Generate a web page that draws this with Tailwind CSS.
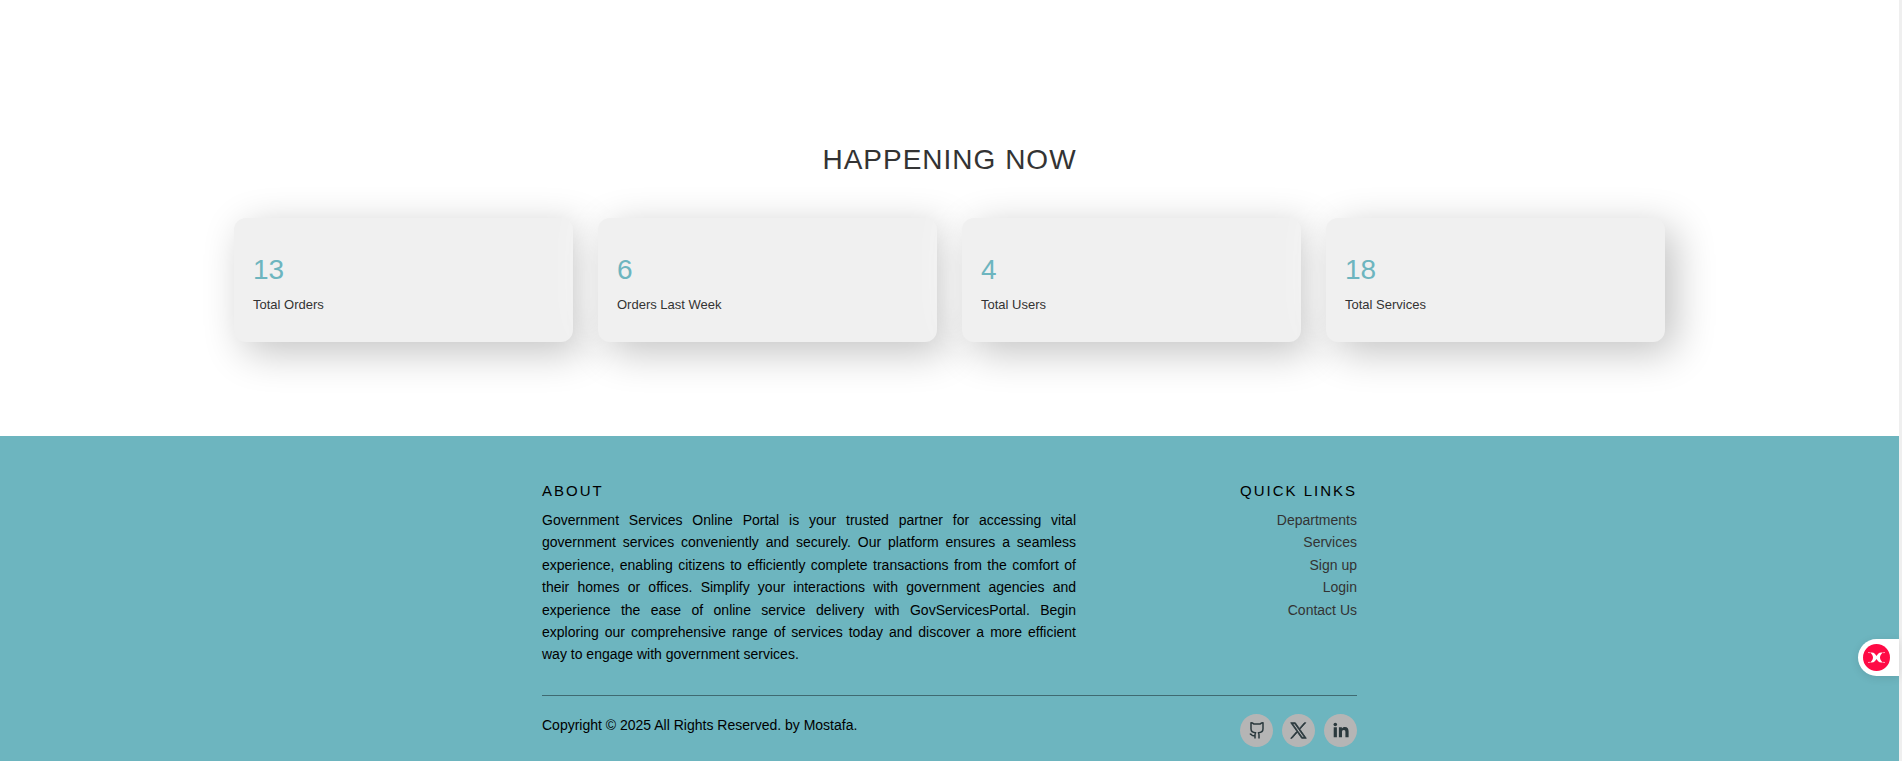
<!DOCTYPE html>
<html lang="en">
<head>
<meta charset="utf-8">
<meta name="viewport" content="width=device-width, initial-scale=1">
<title>Government Services Online Portal</title>
<script src="https://cdn.jsdelivr.net/npm/@tailwindcss/browser@4"></script>
</head>
<body class="flex min-h-screen flex-col border-r-3 border-[#efefef] bg-white font-['Liberation_Sans',Arial,sans-serif] text-sm text-[#333]">
  <main class="px-4 pt-36 pb-[94px]">
    <h2 class="text-center text-[28px] leading-8 tracking-[1px] uppercase">Happening now</h2>
    <section aria-label="Statistics" class="mx-auto mt-[42px] grid max-w-[1431px] grid-cols-2 gap-[25px] lg:grid-cols-4">
      <article class="rounded-xl bg-[#f0f0f0] px-[19px] pt-[34px] pb-7 shadow-[10px_10px_40px_#c2c2c2,-10px_-10px_40px_#ffffff]">
        <p class="text-[28px] leading-9 text-[#6db5bf]">13</p>
        <p class="mt-2 text-[13px] leading-[18px]">Total Orders</p>
      </article>
      <article class="rounded-xl bg-[#f0f0f0] px-[19px] pt-[34px] pb-7 shadow-[10px_10px_40px_#c2c2c2,-10px_-10px_40px_#ffffff]">
        <p class="text-[28px] leading-9 text-[#6db5bf]">6</p>
        <p class="mt-2 text-[13px] leading-[18px]">Orders Last Week</p>
      </article>
      <article class="rounded-xl bg-[#f0f0f0] px-[19px] pt-[34px] pb-7 shadow-[10px_10px_40px_#c2c2c2,-10px_-10px_40px_#ffffff]">
        <p class="text-[28px] leading-9 text-[#6db5bf]">4</p>
        <p class="mt-2 text-[13px] leading-[18px]">Total Users</p>
      </article>
      <article class="rounded-xl bg-[#f0f0f0] px-[19px] pt-[34px] pb-7 shadow-[10px_10px_40px_#c2c2c2,-10px_-10px_40px_#ffffff]">
        <p class="text-[28px] leading-9 text-[#6db5bf]">18</p>
        <p class="mt-2 text-[13px] leading-[18px]">Total Services</p>
      </article>
    </section>
  </main>

  <footer class="flex-1 bg-[#6db5bf] px-4 pt-[45px] pb-3 text-black">
    <div class="mx-auto max-w-[815px]">
      <div class="flex justify-between gap-8">
        <section class="max-w-[534px]">
          <h3 class="text-[15px] leading-5 tracking-[2px] uppercase">About</h3>
          <p class="mt-2 text-justify leading-[1.6]">Government Services Online Portal is your trusted partner for accessing vital government services conveniently and securely. Our platform ensures a seamless experience, enabling citizens to efficiently complete transactions from the comfort of their homes or offices. Simplify your interactions with government agencies and experience the ease of online service delivery with GovServicesPortal. Begin exploring our comprehensive range of services today and discover a more efficient way to engage with government services.</p>
        </section>
        <nav aria-label="Quick links" class="text-right">
          <h3 class="text-[15px] leading-5 tracking-[2px] uppercase">Quick links</h3>
          <ul class="mt-2 leading-[1.6] text-[#333]">
            <li><a href="#departments">Departments</a></li>
            <li><a href="#services">Services</a></li>
            <li><a href="#signup">Sign up</a></li>
            <li><a href="#login">Login</a></li>
            <li><a href="#contact">Contact Us</a></li>
          </ul>
        </nav>
      </div>
      <hr class="mt-[29px] border-t border-[#3f6a71]">
      <div class="flex items-start justify-between pt-[18px]">
        <p class="leading-[22px]">Copyright © 2025 All Rights Reserved. by Mostafa.</p>
        <div class="flex gap-[9px] text-[#2b393d]">
          <a href="#github" aria-label="GitHub" class="flex size-[33px] items-center justify-center rounded-full bg-[#b5b5b5]">
            <svg class="size-[18px]" viewBox="0 0 18 18" fill="none" stroke="currentColor" stroke-width="1.5" stroke-linejoin="round"><path d="M7 17.500v-3.500c0-1.200.2-1.800.6-2.300C4.700 11.700 3 10.300 3 7.800V1.700c1.100 0 2 .5 2.700 1.200h6.600c.7-.7 1.600-1.200 2.700-1.200v6.100c0 2.500-1.700 3.900-4.600 3.900.4.500.6 1.100.6 2.300v3.500M7 14.600c-1.500.3-2.500.1-3.200-.7-.5-.6-1-1-2-1"/></svg>
          </a>
          <a href="#x" aria-label="X" class="flex size-[33px] items-center justify-center rounded-full bg-[#b5b5b5]">
            <svg class="size-[17px]" viewBox="0 0 24 24" fill="currentColor"><path d="M14.095 10.316 22.286 1h-1.940l-7.115 8.087L7.551 1H1l8.590 12.231L1 23h1.940l7.510-8.543L16.448 23H23l-8.905-12.684Zm-2.660 3.022-.872-1.218L3.640 2.432h2.980l5.592 7.821.869 1.219 7.265 10.166h-2.982l-5.930-8.300Z" stroke="currentColor" stroke-width="1.200"/></svg>
          </a>
          <a href="#linkedin" aria-label="LinkedIn" class="flex size-[33px] items-center justify-center rounded-full bg-[#b5b5b5]">
            <svg class="size-[18px]" viewBox="0 0 18 18" fill="currentColor"><circle cx="3.300" cy="3.500" r="1.800"/><path d="M1.700 6.300h3.200v9.900H1.700zM6.900 6.300h3v1.300c.5-.9 1.500-1.500 2.900-1.500 2.900 0 3.800 1.800 3.800 4.500v5.600h-3.200v-4.900c0-1.500-.3-2.300-1.600-2.300-1.400 0-1.800.9-1.800 2.300v4.900H6.900z"/></svg>
          </a>
        </div>
      </div>
    </div>
  </footer>

  <!-- Floating widget tab pinned to the right edge -->
  <button type="button" aria-label="Open assistant" class="fixed right-[3px] bottom-[85px] flex h-[37px] w-[41px] items-center rounded-l-full bg-white pl-[5px] shadow-[0_2px_8px_#0000001a]">
    <svg class="size-[27px]" viewBox="0 0 27 27"><circle cx="13.500" cy="13.500" r="13.500" fill="#ff0a45"/><path d="M7 8.500h1.500c3 0 4.200 2.200 5 3.500.8-1.300 2-3.500 5-3.500H20c-1.700 1.300-3 2.900-3 5s1.300 3.700 3 5h-1.500c-3 0-4.200-2.200-5-3.500-.8 1.300-2 3.500-5 3.500H7c1.700-1.300 3-2.900 3-5s-1.300-3.700-3-5Z" fill="#fff"/><path d="M5 8.500l2 .2M5 18.500l2-.2M22 8.500l-2 .2M22 18.500l-2-.2" stroke="#fff" stroke-opacity=".6"/></svg>
  </button>
</body>
</html>
